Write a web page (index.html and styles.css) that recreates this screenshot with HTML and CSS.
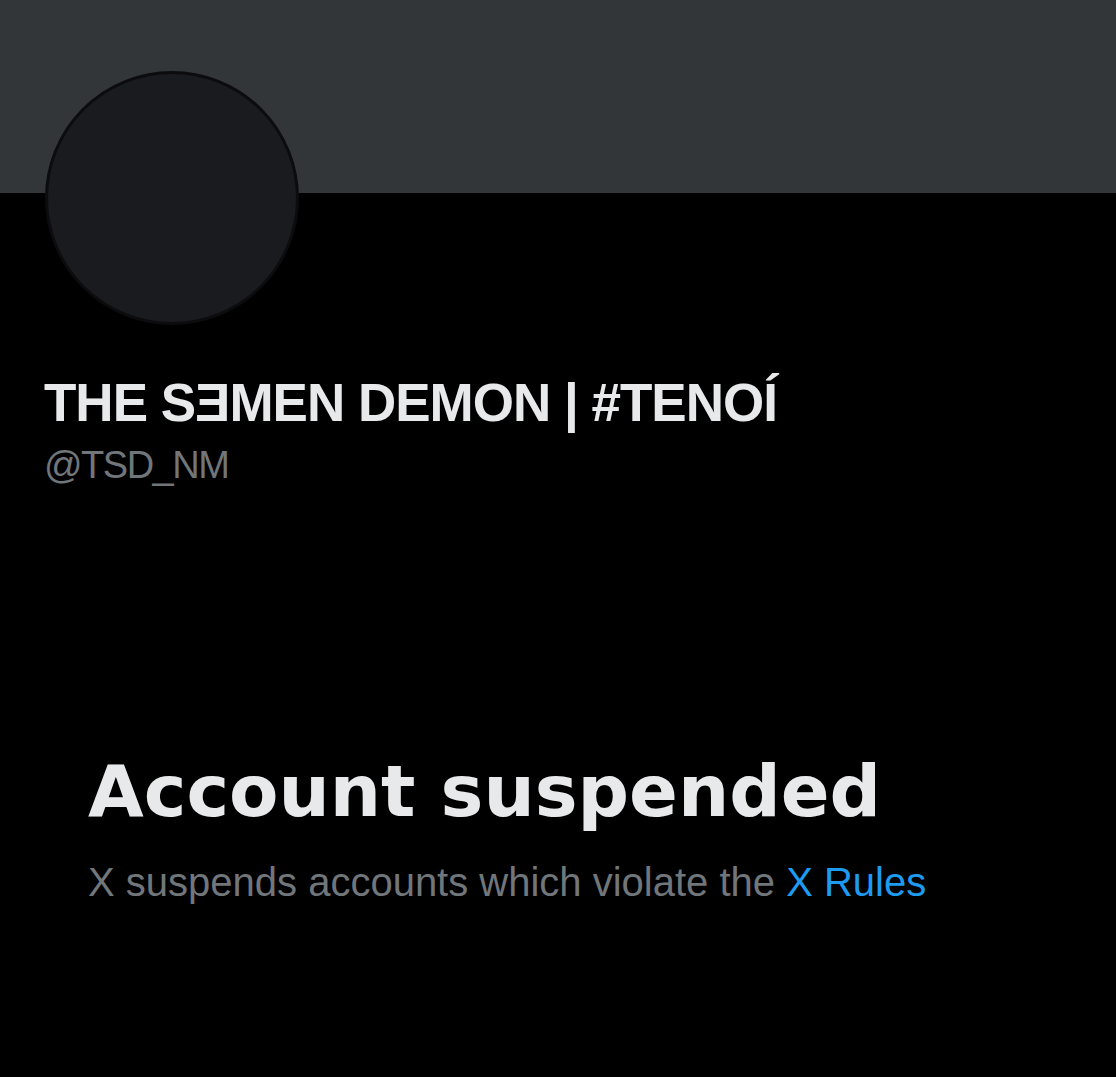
FILE: index.html
```html
<!DOCTYPE html>
<html lang="en">
<head>
<meta charset="utf-8">
<title>Account suspended</title>
<link rel="stylesheet" href="styles.css">
</head>
<body>
<div class="page">
  <div class="banner"></div>
  <div class="profile">
    <div class="avatar"></div>
    <div class="names">
      <div class="display-name">THE SƎMEN DEMON | #TENOÍ</div>
      <div class="handle">@TSD_NM</div>
    </div>
  </div>
  <div class="notice">
    <div class="notice-title">Account suspended</div>
    <div class="notice-text">X suspends accounts which violate the <a class="rules-link" href="#">X Rules</a></div>
  </div>
</div>
</body>
</html>
```
FILE: styles.css
```css
html, body {
  margin: 0;
  padding: 0;
  background: #000;
}
.page {
  width: 1116px;
  height: 1077px;
  overflow: hidden;
  background: #000;
  font-family: "Liberation Sans", Arial, sans-serif;
}
.banner {
  height: 193px;
  background: #333639;
}
.profile {
  padding-left: 44px;
}
.avatar {
  width: 248px;
  height: 248px;
  margin-top: -122px;
  margin-left: 1px;
  border-radius: 50%;
  background: #1a1b1f;
  border: 3px solid #0c0c0e;
}
.names {
  margin-top: 48px;
}
.display-name {
  color: #e7e9ea;
  font-weight: 700;
  font-size: 53px;
  line-height: 60px;
  letter-spacing: -1px;
}
.handle {
  color: #71767b;
  font-size: 38px;
  line-height: 44px;
  letter-spacing: -1.5px;
  margin-top: 10px;
}
.notice {
  padding-left: 88px;
  margin-top: 259px;
}
.notice-title {
  color: #e7e9ea;
  font-family: "DejaVu Sans", "Liberation Sans", sans-serif;
  font-weight: 700;
  font-size: 72px;
  line-height: 90px;
  letter-spacing: 0;
}
.notice-text {
  color: #71767b;
  font-size: 40px;
  line-height: 48px;
  margin-top: 22px;
}
.rules-link {
  color: #1d9bf0;
  text-decoration: none;
}
```
